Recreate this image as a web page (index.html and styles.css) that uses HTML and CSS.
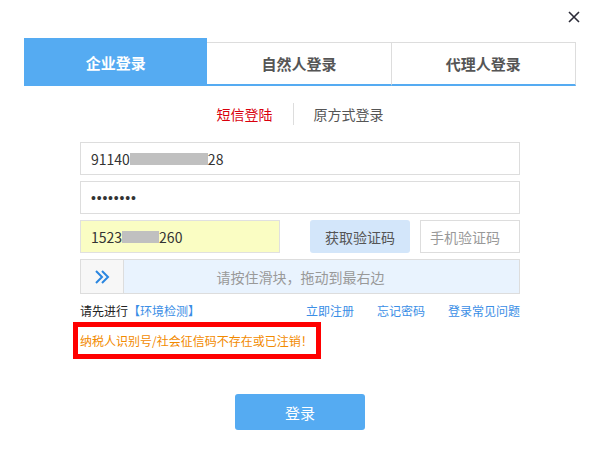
FILE: index.html
```html
<!DOCTYPE html>
<html lang="zh-CN">

<head>
    <meta charset="UTF-8" />
    <meta name="viewport" content="width=device-width, initial-scale=1.0" />
    <title>登录</title>
    <link rel="stylesheet" href="styles.css">
</head>

<body>
    <div class="dialog">
        <div class="dialog-head">
            <svg class="close" width="12" height="12" viewBox="0 0 12 12">
                <path d="M1 1 L11 11 M11 1 L1 11" stroke="#2b2b38" stroke-width="1.6" />
            </svg>
        </div>

        <div class="tabs">
            <div class="tab active">企业登录</div>
            <div class="tab">自然人登录</div>
            <div class="tab">代理人登录</div>
        </div>

        <div class="subtabs">
            <span class="subtab current">短信登陆</span>
            <span class="sep"></span>
            <span class="subtab">原方式登录</span>
        </div>

        <form class="login-form">
            <div class="field">91140<span class="mask mask-long"></span>28</div>
            <div class="field pwd">••••••••</div>
            <div class="sms-row">
                <div class="field phone">1523<span class="mask mask-short"></span>260</div>
                <button type="button" class="get-code">获取验证码</button>
                <div class="field code">手机验证码</div>
            </div>
            <div class="slider">
                <div class="handle">
                    <svg width="16" height="16" viewBox="0 0 16 16">
                        <path d="M2 2 L8 8 L2 14 M8 2 L14 8 L8 14" fill="none" stroke="#2a86e0" stroke-width="2" />
                    </svg>
                </div>
                <div class="track">请按住滑块，拖动到最右边</div>
            </div>
            <div class="links">
                <span>请先进行<a href="#" class="env">【环境检测】</a></span>
                <span class="links-right">
                    <a href="#">立即注册</a>
                    <a href="#">忘记密码</a>
                    <a href="#">登录常见问题</a>
                </span>
            </div>
            <div class="error">纳税人识别号/社会征信码不存在或已注销！</div>
            <div class="submit-row">
                <button type="submit" class="submit">登录</button>
            </div>
        </form>
    </div>
</body>

</html>
```

FILE: styles.css
```css
/* Page */

body {
    margin: 0;
    background: #fff;
    font-family: "Noto Sans CJK SC", "Microsoft YaHei", sans-serif;
    color: #333;
}

.dialog {
    width: 552px;
    margin-left: 24px;
}

.dialog-head {
    height: 38px;
    display: flex;
    justify-content: flex-end;
    align-items: flex-start;
}

.close {
    margin-top: 11px;
    margin-right: -4px;
}
/* Tabs */

.tabs {
    display: flex;
    align-items: flex-end;
    height: 48px;
}

.tab {
    flex: 1;
    height: 41px;
    border: 1px solid #ddd;
    border-bottom: 2px solid #55abf2;
    border-left: none;
    display: flex;
    align-items: center;
    justify-content: center;
    font-size: 15px;
    font-weight: bold;
    color: #555;
}

.tab.active {
    height: 48px;
    border: none;
    background: #55abf2;
    color: #fff;
}
/* Sub tabs */

.subtabs {
    display: flex;
    justify-content: center;
    align-items: center;
    height: 30px;
    margin-top: 13px;
    font-size: 14px;
}

.subtab {
    color: #555;
}

.subtab.current {
    color: #d9000d;
}

.sep {
    width: 1px;
    height: 22px;
    background: #ddd;
    margin: 0 20px;
}
/* Form */

.login-form {
    margin: 13px 56px 0;
}

.field {
    height: 31px;
    border: 1px solid #ddd;
    padding-left: 10px;
    font-size: 14px;
    color: #333;
    margin-bottom: 6px;
    display: flex;
    align-items: center;
}

.pwd {
    font-family: "Liberation Sans", Arial, sans-serif;
    font-size: 14px;
    letter-spacing: 0.8px;
}

.mask {
    display: inline-block;
    height: 12px;
    background: #c0c0c0;
}

.mask-long {
    width: 78px;
}

.mask-short {
    width: 37px;
}

.sms-row {
    display: flex;
    margin-bottom: 6px;
}

.sms-row .field {
    margin-bottom: 0;
}

.phone {
    width: 188px;
    background: #fafdc3;
    border-color: #e0e0e0;
}

.get-code {
    width: 100px;
    height: 33px;
    margin: 0 10px 0 30px;
    border: none;
    border-radius: 3px;
    background: #d3e6fa;
    color: #555;
    font-family: inherit;
    font-size: 14px;
    padding: 0;
}

.code {
    flex: 1;
    color: #999;
    padding-left: 9px;
}
/* Slider */

.slider {
    display: flex;
    height: 33px;
    border: 1px solid #ddd;
}

.handle {
    width: 42px;
    border-right: 1px solid #ddd;
    background: #f7f7f7;
    display: flex;
    align-items: center;
    justify-content: center;
}

.track {
    flex: 1;
    background: #e9f3fe;
    color: #999;
    font-size: 14px;
    display: flex;
    align-items: center;
    justify-content: center;
    padding-right: 42px;
}
/* Links */

.links {
    display: flex;
    justify-content: space-between;
    align-items: center;
    height: 24px;
    margin-top: 4px;
    font-size: 12px;
    color: #222;
}

.links a {
    color: #3a8ee6;
    text-decoration: none;
}

.links-right {
    display: flex;
    gap: 23px;
}
/* Error */

.error {
    margin-left: -7px;
    width: 236px;
    border: 5px solid #ff0000;
    height: 27px;
    line-height: 27px;
    padding-left: 2px;
    font-size: 12px;
    color: #f28a00;
    white-space: nowrap;
}
/* Submit */

.submit-row {
    display: flex;
    justify-content: center;
    margin-top: 35px;
}

.submit {
    width: 130px;
    height: 36px;
    border: none;
    border-radius: 3px;
    background: #55abf2;
    color: #fff;
    font-family: inherit;
    font-size: 15px;
    cursor: pointer;
}
```
